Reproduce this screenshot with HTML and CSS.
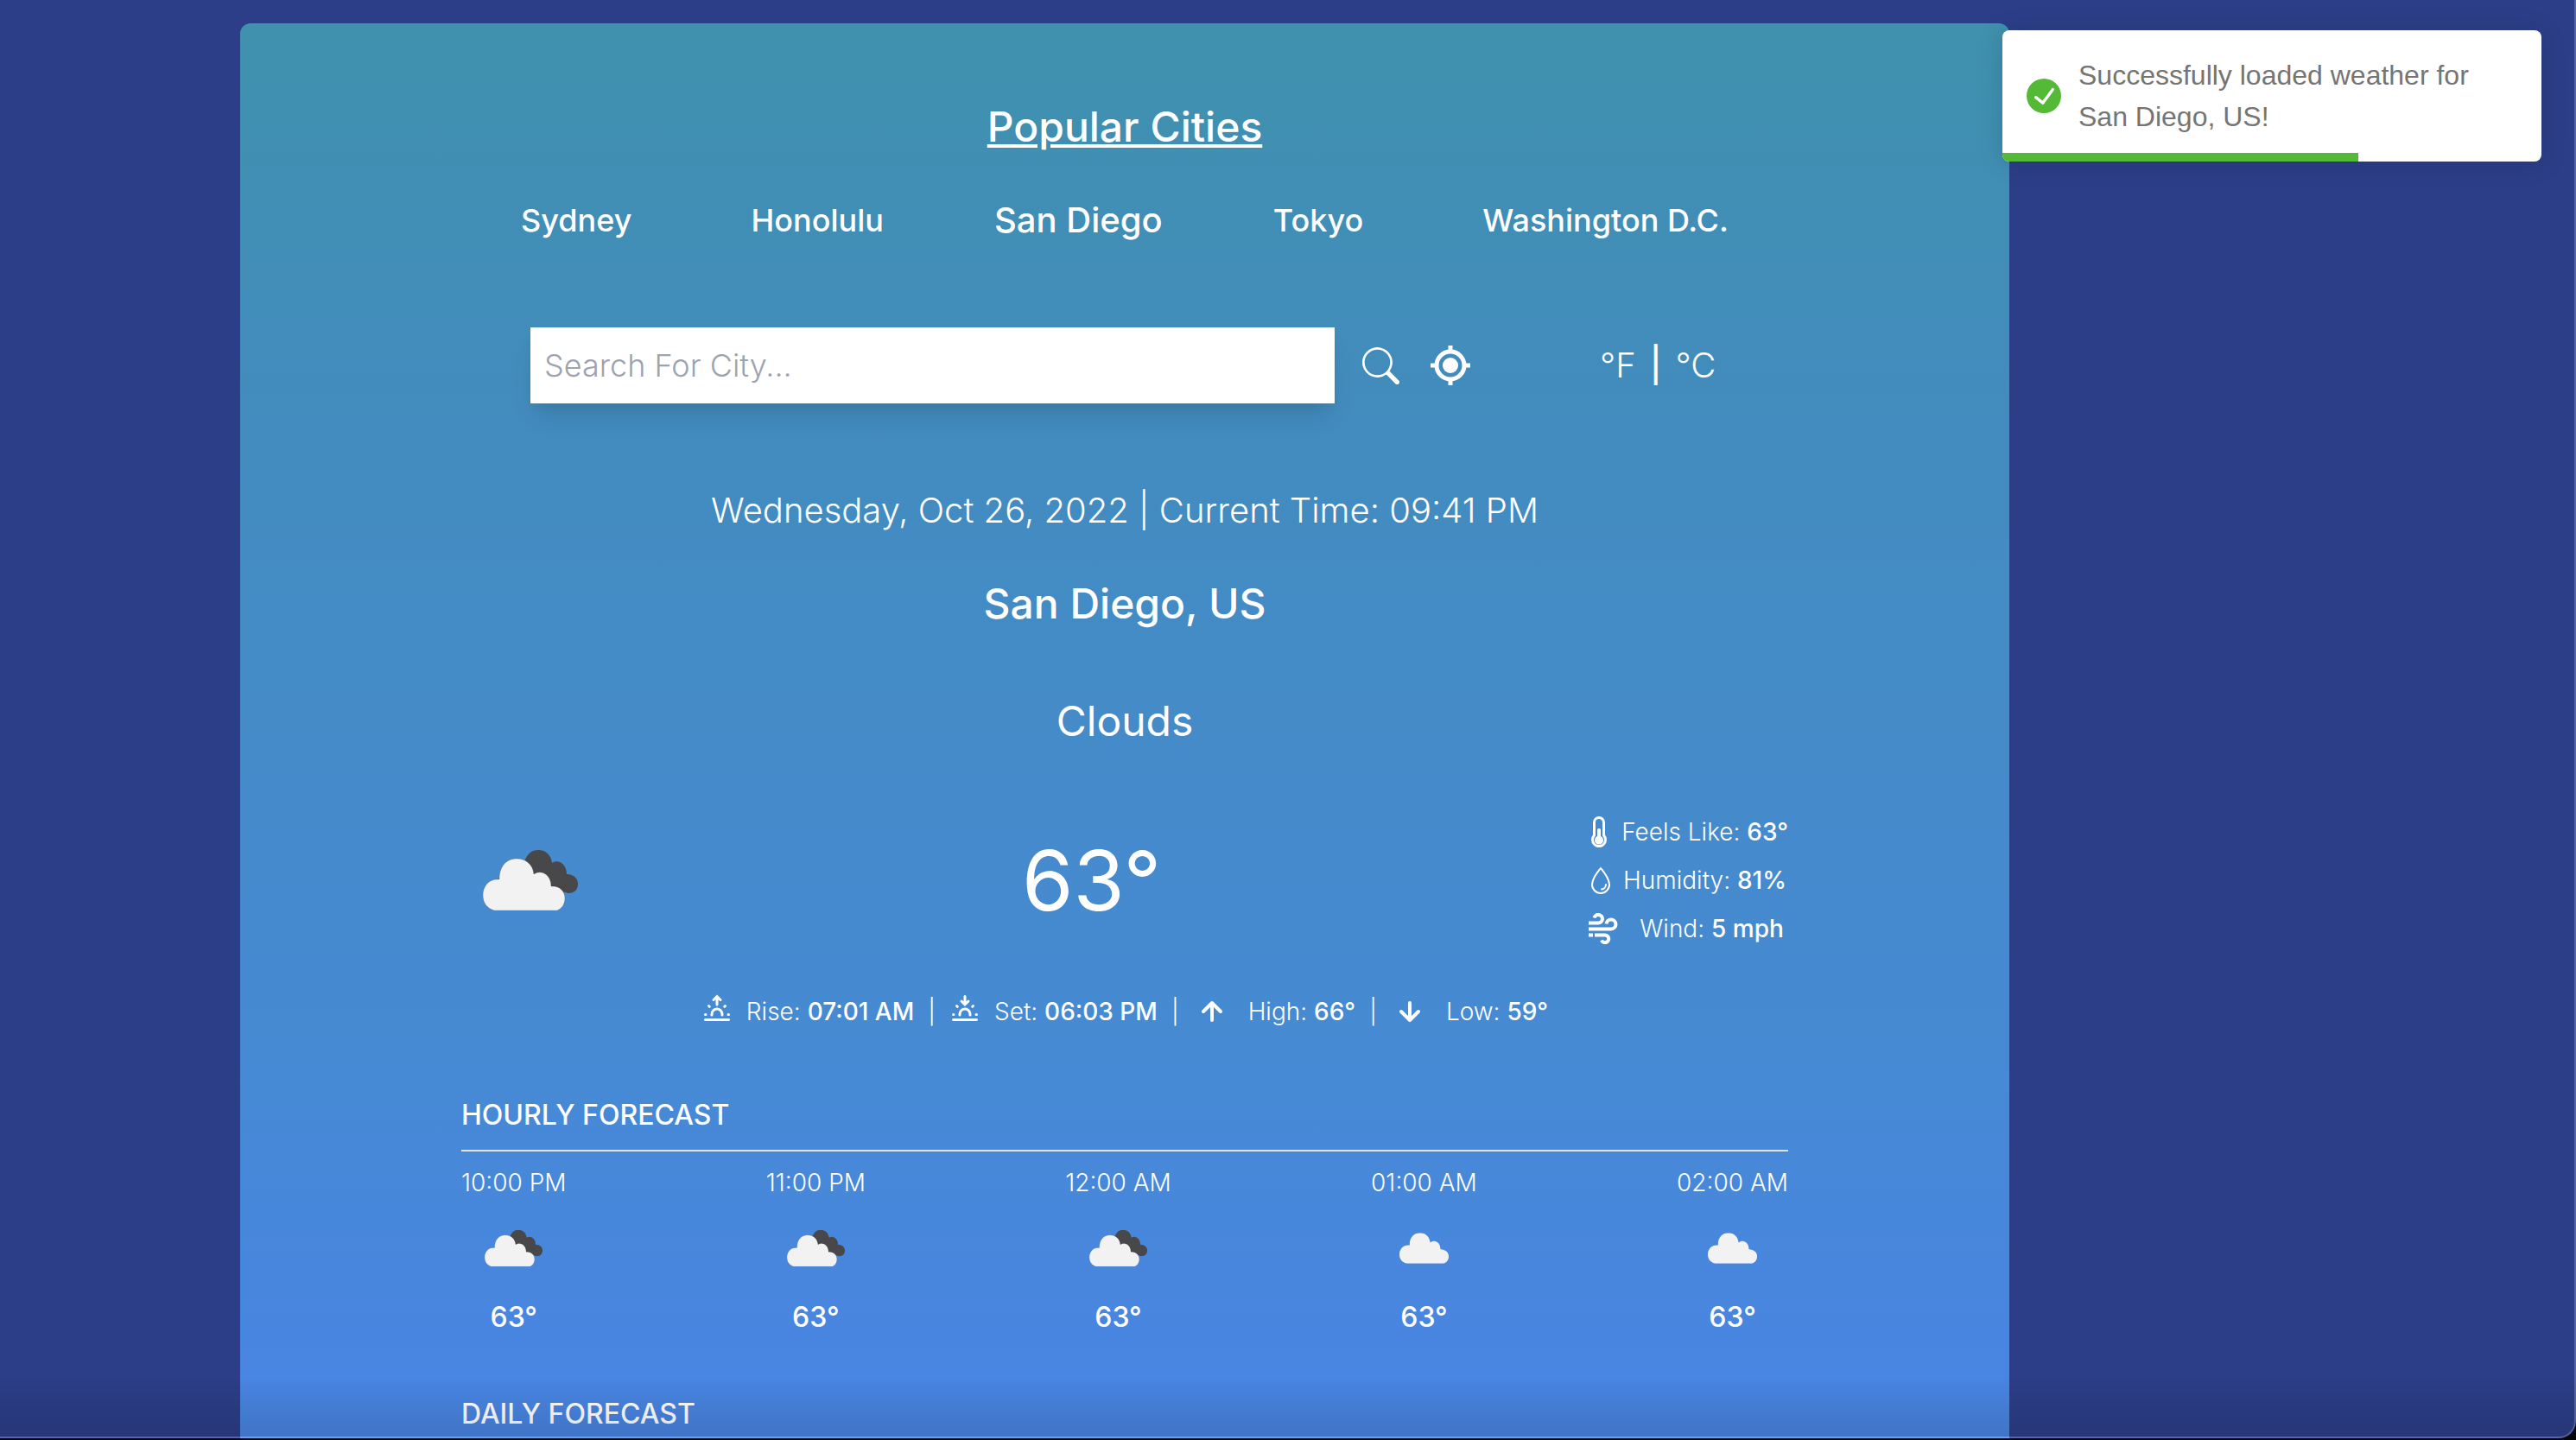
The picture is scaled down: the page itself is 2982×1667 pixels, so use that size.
FILE: index.html
```html
<!DOCTYPE html>
<html lang="en">
<head>
<meta charset="utf-8">
<meta name="viewport" content="width=device-width, initial-scale=1">
<title>Weather</title>
<link rel="stylesheet" href="styles.css">
</head>
<body>
<svg class="defs" aria-hidden="true">
  <symbol id="cloud" viewBox="0 0 96 60">
    <path fill="#f2f2f2" d="M15 60C5 57 0 51 0 42C0 32 7 24 17 24L20 24C19 10 28 0 40 0C51 0 59 8 60 19C69 12 80 19 80 32C90 32 96 38 96 46C96 53 92 58 86 60Z"/>
  </symbol>
  <symbol id="clouds" viewBox="0 0 110 70">
    <path fill="#48484a" d="M48 14C51 4 57 0 64 0C73 0 79 6 80 15C87 10 97 16 97 28C105 28 110 33 110 39C110 46 106 50 99 50L60 40Z"/>
    <path fill="#f2f2f2" stroke="#2f2f31" stroke-opacity=".25" stroke-width="1" d="M13 70C4 67 0 61 0 52C0 42 7 34 16 34L19 34C19 18 28 10 39 10C50 10 58 17 59 28C68 22 79 29 79 42C88 41 95 47 95 56C95 63 91 68 86 70Z"/>
  </symbol>
</svg>
<div class="window">
  <main class="card">
    <h2 class="popular-title">Popular Cities</h2>
    <nav class="cities">
      <button type="button">Sydney</button>
      <button type="button">Honolulu</button>
      <button type="button" class="active">San Diego</button>
      <button type="button">Tokyo</button>
      <button type="button">Washington D.C.</button>
    </nav>

    <form class="search">
      <input type="text" placeholder="Search For City..." aria-label="Search for city">
      <button type="button" class="icon-button" aria-label="Search">
        <svg width="43" height="43" viewBox="0 0 16 16" fill="#fff"><path d="M11.742 10.344a6.5 6.5 0 1 0-1.397 1.398h-.001c.03.04.062.078.098.115l3.85 3.85a1 1 0 0 0 1.415-1.414l-3.85-3.85a1.007 1.007 0 0 0-.115-.1zM12 6.500a5.500 5.500 0 1 1-11 0 5.500 5.500 0 0 1 11 0z"/></svg>
      </button>
      <button type="button" class="icon-button" aria-label="Use my location">
        <svg width="46" height="46" viewBox="0 0 46 46" fill="none" stroke="#fff"><circle cx="23" cy="23" r="16" stroke-width="5"/><circle cx="23" cy="23" r="9" fill="#fff" stroke="none"/><path stroke-width="5" d="M23 0v6M23 40v6M0 23h6M40 23h6"/></svg>
      </button>
      <div class="units">
        <button type="button">°F</button>
        <span class="bar">|</span>
        <button type="button">°C</button>
      </div>
    </form>

    <p class="date">Wednesday, Oct 26, 2022 | Current Time: 09:41 PM</p>
    <h1 class="place">San Diego, US</h1>
    <p class="condition">Clouds</p>

    <section class="current">
      <div class="current-icon"><svg width="110" height="70"><use href="#clouds"/></svg></div>
      <p class="temperature">63°</p>
      <ul class="details">
        <li>
          <svg width="36" height="36" viewBox="0 0 36 36" fill="none" stroke="#fff"><path stroke-width="3" d="M12.500 22V7a5.500 5.500 0 0 1 11 0v15a7.500 7.500 0 1 1-11 0z"/><path stroke="none" fill="#fff" d="M16 16a2 2 0 0 1 4 0v7a5 5 0 1 1-4 0z"/></svg>
          <span>Feels Like: <b>63°</b></span>
        </li>
        <li>
          <svg width="36" height="36" viewBox="0 0 36 36" fill="none" stroke="#fff" stroke-width="2" stroke-linecap="round"><path d="M18 4C14 9 8 16 8 23a10 10 0 0 0 20 0C28 16 22 9 18 4z"/><path d="M24 23a5.500 5.500 0 0 1-5 5.500"/></svg>
          <span>Humidity: <b>81%</b></span>
        </li>
        <li class="wind">
          <svg width="36" height="36" viewBox="0 0 36 36" fill="none" stroke="#fff" stroke-width="4"><path d="M1 11.500h11a4.800 4.800 0 1 0-4.500-6M1 18.500h26a5.500 5.500 0 1 0-5.500-6M1 25.500h5M8 25.500h12a4.300 4.300 0 1 1-4 6"/></svg>
          <span>Wind: <b>5 mph</b></span>
        </li>
      </ul>
    </section>

    <ul class="sun">
      <li>
        <svg width="36" height="36" viewBox="0 0 36 36" fill="none" stroke="#fff" stroke-width="3" stroke-linecap="round"><path d="M4.500 29.500h27M12 24v-1a6 6 0 0 1 12 0v1M18 3v9M14 6.500l4-4 4 4M4.500 23.500h.5M31 23.500h.5M8.500 13.500l.8.800M27.500 13.500l-.8.800"/></svg>
        <span>Rise: <b>07:01 AM</b></span>
      </li>
      <li class="bar">|</li>
      <li>
        <svg width="36" height="36" viewBox="0 0 36 36" fill="none" stroke="#fff" stroke-width="3" stroke-linecap="round"><path d="M4.500 29.500h27M12 24v-1a6 6 0 0 1 12 0v1M18 2.500v9M14 8l4 4 4-4M4.500 23.500h.5M31 23.500h.5M8.500 13.500l.8.800M27.500 13.500l-.8.800"/></svg>
        <span>Set: <b>06:03 PM</b></span>
      </li>
      <li class="bar">|</li>
      <li class="wide">
        <svg width="36" height="36" viewBox="0 0 36 36" fill="none" stroke="#fff" stroke-width="4" stroke-linecap="round" stroke-linejoin="round"><path d="M18 30V10M8 20L18 10L28 20"/></svg>
        <span>High: <b>66°</b></span>
      </li>
      <li class="bar">|</li>
      <li class="wide">
        <svg width="36" height="36" viewBox="0 0 36 36" fill="none" stroke="#fff" stroke-width="4" stroke-linecap="round" stroke-linejoin="round"><path d="M18 10V30M8 20L18 30L28 20"/></svg>
        <span>Low: <b>59°</b></span>
      </li>
    </ul>

    <section class="forecast">
      <h3>Hourly Forecast</h3>
      <hr>
      <ul class="slots">
        <li><span>10:00 PM</span><svg width="67" height="96" viewBox="0 0 110 70"><use href="#clouds"/></svg><b>63°</b></li>
        <li><span>11:00 PM</span><svg width="67" height="96" viewBox="0 0 110 70"><use href="#clouds"/></svg><b>63°</b></li>
        <li><span>12:00 AM</span><svg width="67" height="96" viewBox="0 0 110 70"><use href="#clouds"/></svg><b>63°</b></li>
        <li><span>01:00 AM</span><svg width="57" height="96" viewBox="0 0 96 60"><use href="#cloud"/></svg><b>63°</b></li>
        <li><span>02:00 AM</span><svg width="57" height="96" viewBox="0 0 96 60"><use href="#cloud"/></svg><b>63°</b></li>
      </ul>
    </section>

    <section class="forecast daily">
      <h3>Daily Forecast</h3>
      <hr>
    </section>
  </main>

  <div class="toast" role="alert">
    <svg width="40" height="40" viewBox="0 0 24 24" fill="#55b938"><path d="M12 0a12 12 0 1 0 12 12A12.014 12.014 0 0 0 12 0zm6.927 8.200-6.845 9.289a1.011 1.011 0 0 1-1.430.188l-4.888-3.908a1 1 0 1 1 1.250-1.562l4.076 3.261 6.227-8.451a1 1 0 1 1 1.610 1.183z"/></svg>
    <p>Successfully loaded weather for San Diego, US!</p>
    <div class="progress"></div>
  </div>
</div>
</body>
</html>
```
FILE: styles.css
```css
* {
  box-sizing: border-box;
  margin: 0;
  padding: 0;
}

body {
  height: 100vh;
  padding-bottom: 2px;
  overflow: hidden;
  background: #05060c;
  color: #fff;
  font-family: Inter, "Liberation Sans", sans-serif;
  font-weight: 300;
}

button {
  border: 0;
  background: none;
  color: inherit;
  font: inherit;
  cursor: pointer;
}

ul {
  list-style: none;
}

svg {
  flex: none;
}

b {
  font-weight: 500;
}

.defs {
  position: absolute;
  width: 0;
  height: 0;
}

.window {
  position: relative;
  height: 100%;
  padding: 27px 378px 0 0;
  overflow: hidden;
  border-radius: 0 0 20px 0;
  background: #2c3e88;
}

/* Soft shade along the bottom edge and the thin light frame. */
.window::after {
  content: "";
  position: absolute;
  inset: 0;
  border: solid rgba(255, 255, 255, 0.2);
  border-width: 0 2px 2px 0;
  border-radius: 0 0 20px 0;
  background: linear-gradient(to top, rgba(0, 0, 0, 0.12), rgba(0, 0, 0, 0) 70px);
  pointer-events: none;
}

.card {
  max-width: 2048px;
  min-height: 1800px;
  margin: 0 auto;
  padding: 88px 256px;
  border-radius: 12px;
  background: linear-gradient(to bottom, #3f91ad 0, #428cbd 420px, #468ad3 1180px, #4985e2 1560px);
}

.popular-title {
  font-size: 48px;
  font-weight: 500;
  line-height: 64px;
  text-align: center;
  text-decoration: underline;
}

.cities {
  display: flex;
  justify-content: space-around;
  align-items: center;
  margin-top: 48px;
  font-size: 36px;
  font-weight: 500;
  line-height: 56px;
}

.cities .active {
  margin: 0 -10px;
  font-size: 40px;
}

.search {
  display: flex;
  align-items: center;
  margin-top: 96px;
  padding: 0 80px;
}

.search input {
  flex: 1;
  max-width: 931px;
  height: 88px;
  padding: 16px;
  border: 0;
  background: #fff;
  box-shadow: 0 20px 30px -6px rgba(0, 0, 0, 0.1), 0 8px 12px -4px rgba(0, 0, 0, 0.05);
  color: #374151;
  font: 300 36px/56px Inter, sans-serif;
}

.search input::placeholder {
  color: #9ca3af;
}

.icon-button {
  display: flex;
  margin-left: 32px;
}

.icon-button + .icon-button {
  margin-left: 36px;
}

.units {
  display: flex;
  margin-left: 150px;
  font-size: 40px;
  line-height: 56px;
}

.units .bar {
  margin: 0 16px;
  font-weight: 500;
}

.date {
  margin-top: 96px;
  font-size: 40px;
  line-height: 56px;
  text-align: center;
}

.place {
  margin-top: 48px;
  font-size: 48px;
  font-weight: 500;
  line-height: 64px;
  text-align: center;
}

.condition {
  margin-top: 72px;
  font-size: 48px;
  font-weight: 400;
  line-height: 64px;
  text-align: center;
}

.current {
  display: flex;
  justify-content: space-between;
  align-items: center;
  margin-top: 76px;
}

.current-icon {
  display: flex;
  justify-content: center;
  width: 160px;
}

.temperature {
  font-size: 96px;
  font-weight: 400;
  line-height: 96px;
}

.details {
  display: flex;
  flex-direction: column;
  align-items: center;
  gap: 16px;
  font-size: 28px;
  line-height: 40px;
}

.details li {
  display: flex;
  align-items: center;
  gap: 8px;
}

.details .wind {
  gap: 24px;
}

.sun {
  display: flex;
  justify-content: center;
  margin-top: 56px;
  font-size: 28px;
  line-height: 40px;
}

.sun li {
  display: flex;
  gap: 16px;
}

.sun .bar {
  margin: 0 16px;
}

.sun .wide {
  gap: 24px;
  margin-left: 4px;
}

.forecast {
  margin-top: 76px;
}

.daily {
  margin-top: 64px;
}

.forecast h3 {
  font-size: 32px;
  font-weight: 500;
  line-height: 48px;
  text-transform: uppercase;
}

.forecast hr {
  margin: 16px 0;
  border: 0;
  border-top: 2px solid #e5e7eb;
}

.slots {
  display: flex;
  justify-content: space-between;
}

.slots li {
  display: flex;
  flex-direction: column;
  align-items: center;
  font-size: 28px;
  line-height: 40px;
}

.slots svg {
  margin: 8px 0;
}

.slots b {
  font-size: 32px;
  line-height: 48px;
}

.toast {
  position: absolute;
  top: 35px;
  right: 40px;
  display: flex;
  align-items: center;
  width: 624px;
  height: 152px;
  padding: 16px 28px;
  overflow: hidden;
  border-radius: 8px;
  background: #fff;
  box-shadow: 0 2px 30px rgba(0, 0, 0, 0.15);
  color: #757575;
  font: 400 32px/48px "Liberation Sans", sans-serif;
}

.toast p {
  margin-left: 20px;
}

.progress {
  position: absolute;
  bottom: 0;
  left: 0;
  width: 66%;
  height: 10px;
  background: #55b938;
}
```
